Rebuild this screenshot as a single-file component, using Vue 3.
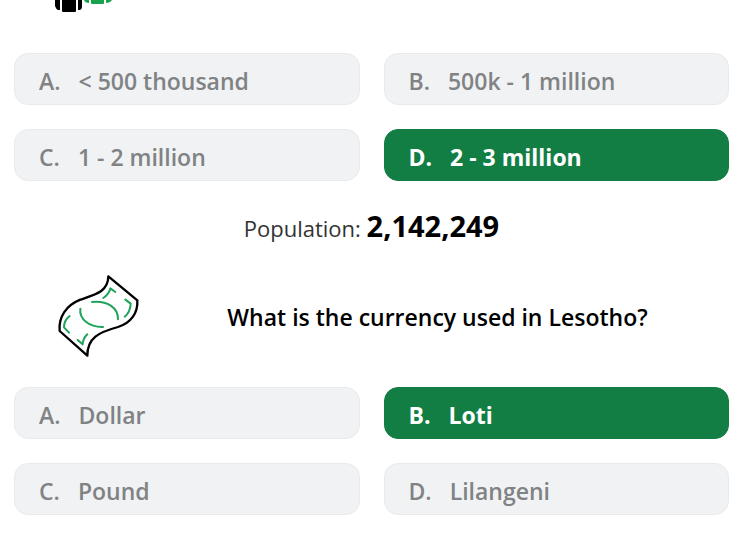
<script setup>
import { ref } from 'vue'

const population = ref('D')
const currency = ref('B')

const populationOptions = [
  { key: 'A', text: '< 500 thousand' },
  { key: 'B', text: '500k - 1 million' },
  { key: 'C', text: '1 - 2 million' },
  { key: 'D', text: '2 - 3 million' },
]
const currencyOptions = [
  { key: 'A', text: 'Dollar' },
  { key: 'B', text: 'Loti' },
  { key: 'C', text: 'Pound' },
  { key: 'D', text: 'Lilangeni' },
]
</script>

<template>
  <main class="quiz">
    <div class="people">
      <svg width="64" height="16" viewBox="0 0 64 16" aria-hidden="true">
        <path d="M0 0h5v10H3q-2-1-3-4z" fill="#000" />
        <path d="M7 0h14v11q0 1-1 1H8q-1 0-1-1z" fill="#000" />
        <path d="M23 0h4v7q0 2-2 3h-2z" fill="#000" />
        <path d="M29 0h5v3q-4 0-5-3z" fill="#17a34a" />
        <path d="M36 0h13v3q0 1-1 1H37q-1 0-1-1z" fill="#17a34a" />
        <path d="M51 0h6q-2 3-6 3z" fill="#17a34a" />
      </svg>
    </div>

    <section class="options">
      <button
        v-for="option in populationOptions"
        :key="option.key"
        type="button"
        class="option"
        :class="{ correct: option.key === population }"
      >
        <span>{{ option.key }}.</span>
        <span>{{ option.text }}</span>
      </button>
    </section>

    <p class="answer">Population: <strong>2,142,249</strong></p>

    <header class="question">
      <svg class="note" width="96" height="96" viewBox="0 0 288 288" fill="none" aria-hidden="true">
        <path
          d="M175 25L262 97C264 135 243 165 204 177C146 193 112 209 112 263L29 189C25 146 49 112 91 95C139 79 174 71 175 25Z"
          stroke="#000" stroke-width="7" stroke-linejoin="round"
        />
        <g stroke="#1fa35a" stroke-width="6" stroke-linecap="round" stroke-linejoin="round">
          <path d="M126 102C171 97 205 119 204 154" />
          <path d="M91 122C87 155 119 178 159 177" />
          <path d="M196 72L181 61Q177 79 160 90" />
          <path d="M226 95L242 107Q241 132 224 146" />
          <path d="M59 144Q42 157 42 178L57 194" />
          <path d="M83 216L98 229Q99 211 112 199" />
        </g>
      </svg>
      <h2>What is the currency used in Lesotho?</h2>
    </header>

    <section class="options">
      <button
        v-for="option in currencyOptions"
        :key="option.key"
        type="button"
        class="option"
        :class="{ correct: option.key === currency }"
      >
        <span>{{ option.key }}.</span>
        <span>{{ option.text }}</span>
      </button>
    </section>
  </main>
</template>

<style>
body {
  margin: 0;
  background: #fff;
}
</style>

<style scoped>
.quiz {
  box-sizing: border-box;
  padding: 0 21px 21px 14px;
  color: #000;
  font-family: "Segoe UI", "Open Sans", "Noto Sans", sans-serif;
}
.people {
  display: flex;
  padding: 0 41px 37px;
}
.options {
  display: grid;
  grid-template-columns: 1fr 1fr;
  gap: 24px;
}
.option {
  display: flex;
  align-items: center;
  gap: 18px;
  height: 52px;
  padding: 3px 24px 0;
  border: 1px solid #e8ebed;
  border-radius: 14px;
  background: #f0f2f4;
  color: #808284;
  font: inherit;
  font-size: 23px;
  font-weight: 600;
  line-height: 32px;
  text-align: left;
  white-space: nowrap;
}
.option.correct {
  border-color: #127e44;
  background: #127e44;
  color: #fff;
  font-weight: 700;
}
.answer {
  margin: 24px 0 0;
  color: #333;
  font-size: 22px;
  line-height: 42px;
  text-align: center;
}
.answer strong {
  color: #000;
  font-size: 29px;
  font-weight: 700;
}
.question {
  display: flex;
  align-items: center;
  padding: 19px 0 23px 36px;
}
.note {
  flex: none;
}
.question h2 {
  flex: 1;
  margin: 0;
  padding: 2px 0 0;
  font-size: 23px;
  font-weight: 600;
  line-height: 32px;
  text-align: center;
}
</style>
